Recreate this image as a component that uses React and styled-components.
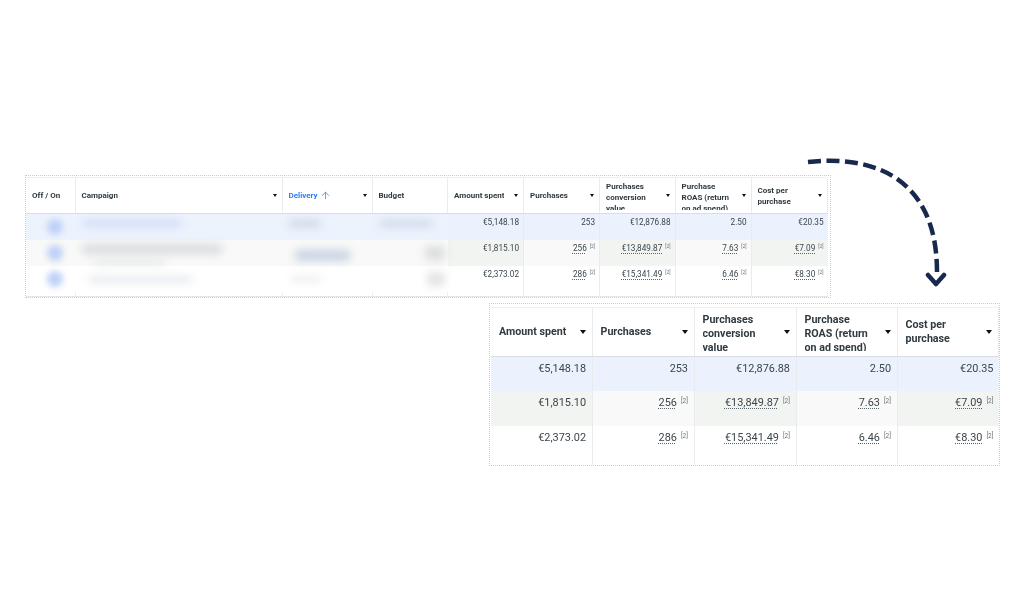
import styled, { createGlobalStyle } from 'styled-components'
import { ArrowUp } from 'lucide-react'

const GlobalStyle = createGlobalStyle`
  html, body {
    margin: 0;
    background: #fff;
    font-family: Roboto, "Liberation Sans", sans-serif;
  }
`

const Page = styled.div`
  position: relative;
  width: 1024px;
  height: 600px;
  overflow: hidden;
  padding: 175px 0 0 25px;
  box-sizing: border-box;
  background: #fff;
`

const Frame = styled.div`
  width: ${(p) => p.$width}px;
  margin: ${(p) => p.$margin};
  padding: ${(p) => p.$padding};
  box-sizing: border-box;
  border: 1px dotted #c9ced2;
  background: #fff;
  filter: blur(0.45px);
`

const Grid = styled.div`
  display: grid;
  grid-template-columns: ${(p) => p.$columns};
  grid-template-rows: ${(p) => p.$rows};
  border-top: 1px solid #eef0f1;
`

const HeadCell = styled.div`
  display: flex;
  align-items: center;
  justify-content: space-between;
  gap: 4px;
  padding: ${(p) => (p.$large ? '0 6px 0 8px' : '0 5px 0 6px')};
  overflow: hidden;
  background: #fff;
  border-right: 1px solid #e9ebec;
  border-bottom: 1px solid #d9dde0;
  font-size: ${(p) => (p.$large ? 10.7 : 8)}px;
  line-height: ${(p) => (p.$large ? 14 : 11)}px;
  font-weight: 700;
  color: ${(p) => (p.$accent ? '#2d7ff0' : '#2f3a40')};
  &:last-child { border-right: 0; }
`

// tall headers get cut off mid-line, like in the original table
const HeadText = styled.div`
  max-height: ${(p) => (p.$large ? 38 : 29)}px;
  overflow: hidden;
`

const HeadLabel = styled.span`
  display: inline-flex;
  align-items: center;
  gap: 2px;
`

const Caret = styled.i`
  flex: none;
  width: 0;
  height: 0;
  border-left: ${(p) => (p.$large ? 3.5 : 2.5)}px solid transparent;
  border-right: ${(p) => (p.$large ? 3.5 : 2.5)}px solid transparent;
  border-top: ${(p) => (p.$large ? 4 : 3)}px solid #111;
`

const rowColors = {
  blue: ['#ebf1fd', '#ebf1fd'],
  grey: ['#f1f4f1', '#f8f9f8'],
  plain: ['#fff', '#fff'],
}

const Cell = styled.div`
  padding: ${(p) => (p.$large ? '5px 5.5px 0 0' : '3px 4px 0 0')};
  text-align: right;
  background: ${(p) => rowColors[p.$tone][p.$odd ? 1 : 0]};
  border-right: 1px solid #e9ebec;
  font-size: ${(p) => (p.$large ? 10.9 : 8.2)}px;
  line-height: ${(p) => (p.$large ? 14 : 11)}px;
  color: #3b464c;
  white-space: nowrap;
  &:last-child { border-right: 0; }
`

const SmudgeCell = styled.div`
  display: flex;
  flex-direction: column;
  justify-content: center;
  align-items: ${(p) => (p.$center ? 'center' : 'flex-start')};
  gap: 5px;
  padding: ${(p) => (p.$center ? '0 0 0 8px' : '0 6px')};
  background: ${(p) => (p.$tone === 'blue' ? '#edf3fd' : rowColors[p.$tone][1])};
`

// blurred-out campaign data from the original screenshot
const Smudge = styled.span`
  display: block;
  flex: none;
  width: ${(p) => p.$w}px;
  height: ${(p) => p.$h || 6}px;
  margin: ${(p) => p.$y || 0}px 0 0 ${(p) => p.$x || 0}px;
  border-radius: 4px;
  background: ${(p) => p.$color};
  filter: blur(4px);
`

const Toggle = styled.span`
  display: block;
  width: 16px;
  height: 16px;
  border-radius: 50%;
  background: #bed1f8;
  filter: blur(3px);
`

const Linked = styled.span`
  text-decoration: underline dotted #59646a;
  text-underline-offset: 2px;
`

const Note = styled.sup`
  font-size: ${(p) => (p.$large ? 6.5 : 4.8)}px;
  line-height: 0;
  margin-left: ${(p) => (p.$large ? 4 : 3)}px;
  vertical-align: ${(p) => (p.$large ? 3.5 : 3)}px;
  color: #68737a;
`

// rows sit straight in the parent grid
const Row = styled.div`
  display: contents;
`

const TailCell = styled.div`
  background: #fff;
  border-right: 1px solid #eceeef;
  border-bottom: 1px solid #e3e5e7;
`

const ArrowArt = styled.svg`
  position: absolute;
  left: 800px;
  top: 150px;
  pointer-events: none;
  filter: blur(0.3px);
`

const metricHeads = [
  ['Amount spent'],
  ['Purchases'],
  ['Purchases', 'conversion', 'value'],
  ['Purchase', 'ROAS (return', 'on ad spend)'],
  ['Cost per', 'purchase'],
]

const metricRows = [
  { tone: 'blue', values: ['€5,148.18', '253', '€12,876.88', '2.50', '€20.35'] },
  { tone: 'grey', values: ['€1,815.10', '256', '€13,849.87', '7.63', '€7.09'], linked: true },
  { tone: 'plain', values: ['€2,373.02', '286', '€15,341.49', '6.46', '€8.30'], linked: true },
]

const smudges = [
  {
    campaign: [{ w: 100, h: 7, y: -8, color: '#cfdcf6' }],
    delivery: [{ w: 32, h: 7, y: -8, color: '#cdd6e6' }],
    budget: [{ w: 54, h: 7, y: -8, color: '#cfd8ea' }],
  },
  {
    campaign: [{ w: 140, h: 10, y: 2, color: '#d9dbdf' }, { w: 70, h: 6, x: 12, color: '#e6e8ea' }],
    delivery: [{ w: 55, h: 11, x: 6, y: 4, color: '#c9d3e4' }],
    budget: [{ w: 20, h: 14, x: 46, color: '#dcdddf' }],
  },
  {
    campaign: [{ w: 105, h: 7, x: 6, color: '#e8eaef' }],
    delivery: [{ w: 30, h: 6, x: 2, color: '#ebecee' }],
    budget: [{ w: 18, h: 14, x: 48, color: '#e2e3e4' }],
  },
]

const Metrics = ({ large }) =>
  metricHeads.map((lines) => (
    <HeadCell key={lines.join()} $large={large}>
      <HeadText $large={large}>
        {lines.map((line) => (
          <div key={line}>{line}</div>
        ))}
      </HeadText>
      <Caret $large={large} />
    </HeadCell>
  ))

const MetricCells = ({ row, large }) =>
  row.values.map((value, i) => (
    <Cell key={value} $tone={row.tone} $odd={i % 2 === 1} $large={large}>
      {row.linked && i > 0 ? (
        <>
          <Linked>{value}</Linked>
          <Note $large={large}>[2]</Note>
        </>
      ) : (
        value
      )}
    </Cell>
  ))

const SmudgeList = ({ items, tone }) => (
  <SmudgeCell $tone={tone}>
    {items.map((s, i) => (
      <Smudge key={i} $w={s.w} $h={s.h} $x={s.x} $y={s.y} $color={s.color} />
    ))}
  </SmudgeCell>
)

const App = () => (
  <Page>
    <GlobalStyle />

    <Frame $width={806} $margin="0" $padding="1px 4px 0 0">
      <Grid
        $columns="49.5px 207px 90px 75.5px 76px 76px 75.5px 76px 76px"
        $rows="36px 26px 26px 26px 5px"
      >
        <HeadCell>Off / On</HeadCell>
        <HeadCell>
          Campaign
          <Caret />
        </HeadCell>
        <HeadCell $accent>
          <HeadLabel>
            Delivery
            <ArrowUp size={11} strokeWidth={1.6} />
          </HeadLabel>
          <Caret />
        </HeadCell>
        <HeadCell>Budget</HeadCell>
        <Metrics />
        {metricRows.map((row, r) => (
          <Row key={row.tone}>
            <SmudgeCell $tone={row.tone} $center>
              <Toggle />
            </SmudgeCell>
            <SmudgeList items={smudges[r].campaign} tone={row.tone} />
            <SmudgeList items={smudges[r].delivery} tone={row.tone} />
            <SmudgeList items={smudges[r].budget} tone={row.tone} />
            <MetricCells row={row} />
          </Row>
        ))}
        {Array.from({ length: 9 }, (_, i) => (
          <TailCell key={i} />
        ))}
      </Grid>
    </Frame>

    <Frame $width={511} $margin="5px 0 0 464px" $padding="3px 0 0 1px">
      <Grid $columns="101.5px 102px 102px 101px 101.5px" $rows="49px 34px 35px 39px">
        <Metrics large />
        {metricRows.map((row) => (
          <Row key={row.tone}>
            <MetricCells row={row} large />
          </Row>
        ))}
      </Grid>
    </Frame>

    <ArrowArt width="160" height="145" viewBox="800 150 160 145" fill="none">
      <path
        d="M808 162 C 870 155, 937 175, 937 272"
        stroke="#17294d"
        strokeWidth="4.5"
        strokeDasharray="13 5.5"
      />
      <path
        d="M928 275 L936 284 L944 275"
        stroke="#17294d"
        strokeWidth="4.5"
        strokeLinecap="round"
        strokeLinejoin="round"
      />
    </ArrowArt>
  </Page>
)

export default App
